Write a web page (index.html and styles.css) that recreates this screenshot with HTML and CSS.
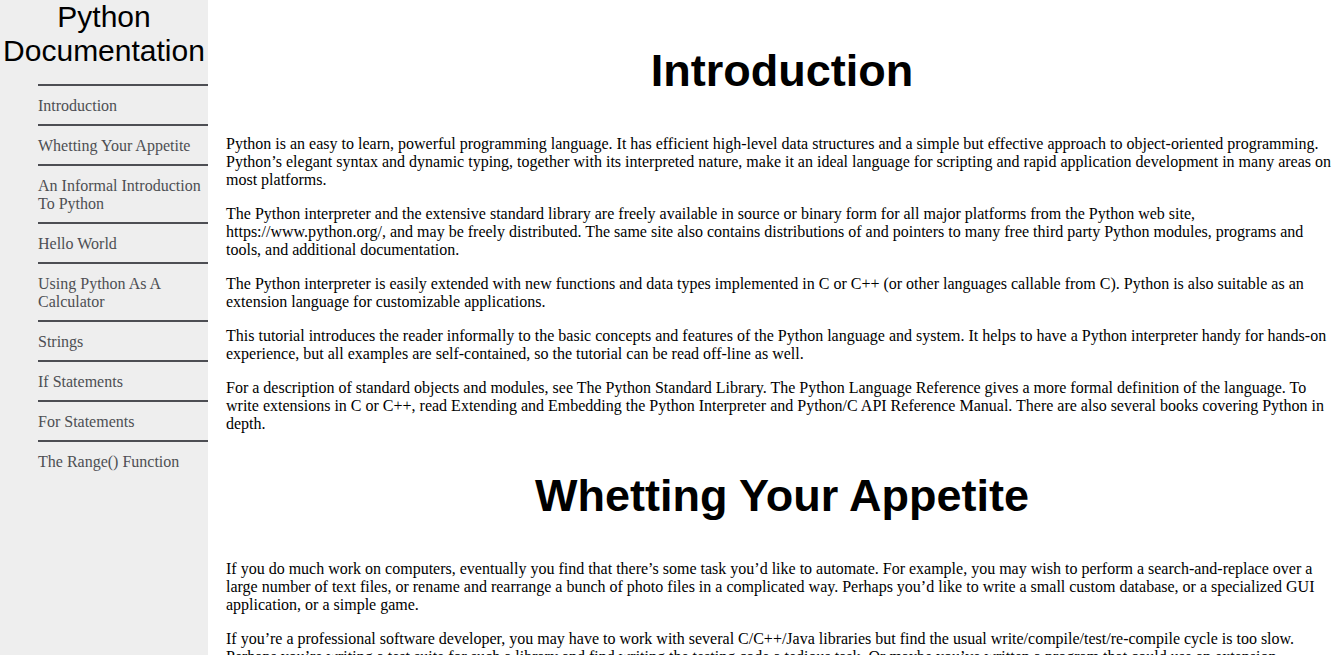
FILE: index.html
```html
<!DOCTYPE html>
<html lang="en">
<head>
<meta charset="utf-8">
<title>Python Documentation</title>
<link rel="stylesheet" href="styles.css">
</head>
<body>
<div class="page">
  <nav class="navbar" id="navbar">
    <header class="nav-title">Python Documentation</header>
    <ul class="nav-list">
      <li><a class="nav-link" href="#Introduction">Introduction</a></li>
      <li><a class="nav-link" href="#Whetting_Your_Appetite">Whetting Your Appetite</a></li>
      <li><a class="nav-link" href="#An_Informal_Introduction_To_Python">An Informal Introduction To Python</a></li>
      <li><a class="nav-link" href="#Hello_World">Hello World</a></li>
      <li><a class="nav-link" href="#Using_Python_As_A_Calculator">Using Python As A Calculator</a></li>
      <li><a class="nav-link" href="#Strings">Strings</a></li>
      <li><a class="nav-link" href="#If_Statements">If Statements</a></li>
      <li><a class="nav-link" href="#For_Statements">For Statements</a></li>
      <li><a class="nav-link" href="#The_Range_Function">The Range() Function</a></li>
    </ul>
  </nav>
  <main class="main-doc" id="main-doc">
    <section class="main-section" id="Introduction">
      <header class="section-title">Introduction</header>
      <p>Python is an easy to learn, powerful programming language. It has efficient high-level data structures and a simple but effective approach to object-oriented programming. Python’s elegant syntax and dynamic typing, together with its interpreted nature, make it an ideal language for scripting and rapid application development in many areas on most platforms.</p>
      <p>The Python interpreter and the extensive standard library are freely available in source or binary form for all major platforms from the Python web site, https://www.python.org/, and may be freely distributed. The same site also contains distributions of and pointers to many free third party Python modules, programs and tools, and additional documentation.</p>
      <p>The Python interpreter is easily extended with new functions and data types implemented in C or C++ (or other languages callable from C). Python is also suitable as an extension language for customizable applications.</p>
      <p>This tutorial introduces the reader informally to the basic concepts and features of the Python language and system. It helps to have a Python interpreter handy for hands-on experience, but all examples are self-contained, so the tutorial can be read off-line as well.</p>
      <p>For a description of standard objects and modules, see The Python Standard Library. The Python Language Reference gives a more formal definition of the language. To write extensions in C or C++, read Extending and Embedding the Python Interpreter and Python/C API Reference Manual. There are also several books covering Python in depth.</p>
    </section>
    <section class="main-section" id="Whetting_Your_Appetite">
      <header class="section-title">Whetting Your Appetite</header>
      <p>If you do much work on computers, eventually you find that there’s some task you’d like to automate. For example, you may wish to perform a search-and-replace over a large number of text files, or rename and rearrange a bunch of photo files in a complicated way. Perhaps you’d like to write a small custom database, or a specialized GUI application, or a simple game.</p>
      <p>If you’re a professional software developer, you may have to work with several C/C++/Java libraries but find the usual write/compile/test/re-compile cycle is too slow. Perhaps you’re writing a test suite for such a library and find writing the testing code a tedious task. Or maybe you’ve written a program that could use an extension language, and you don’t want to design and implement a whole new language for your application.</p>
    </section>
  </main>
</div>
</body>
</html>
```
FILE: styles.css
```css
html, body {
  margin: 0;
  padding: 0;
  background: #ffffff;
}

body {
  font-family: "Liberation Serif", "Times New Roman", serif;
  font-size: 16px;
  color: #000000;
}

.page {
  display: flex;
  align-items: stretch;
  min-height: 100vh;
}

.navbar {
  flex: 0 0 208px;
  width: 208px;
  background: #eeeeee;
}

.nav-title {
  font-family: "Liberation Sans", Arial, sans-serif;
  font-size: 30px;
  text-align: center;
  color: #000000;
  margin: 0 0 16px;
}

.nav-list {
  list-style: none;
  margin: 0 0 0 38px;
  padding: 0;
}

.nav-list li {
  border-top: 2px solid #4d4e53;
}

.nav-link {
  display: block;
  padding: 11px 0 9px;
  color: #4d4e53;
  text-decoration: none;
}

.main-doc {
  flex: 1 1 auto;
  min-width: 0;
  padding: 45px 5px 0 18px;
}

.main-section {
  padding-top: 21px;
}

.main-section:first-child {
  padding-top: 0;
}

.section-title {
  font-family: "Liberation Sans", Arial, sans-serif;
  font-size: 45px;
  font-weight: bold;
  text-align: center;
  margin: 0 0 38px;
}

.main-section p {
  margin: 0 0 16px;
}
```
